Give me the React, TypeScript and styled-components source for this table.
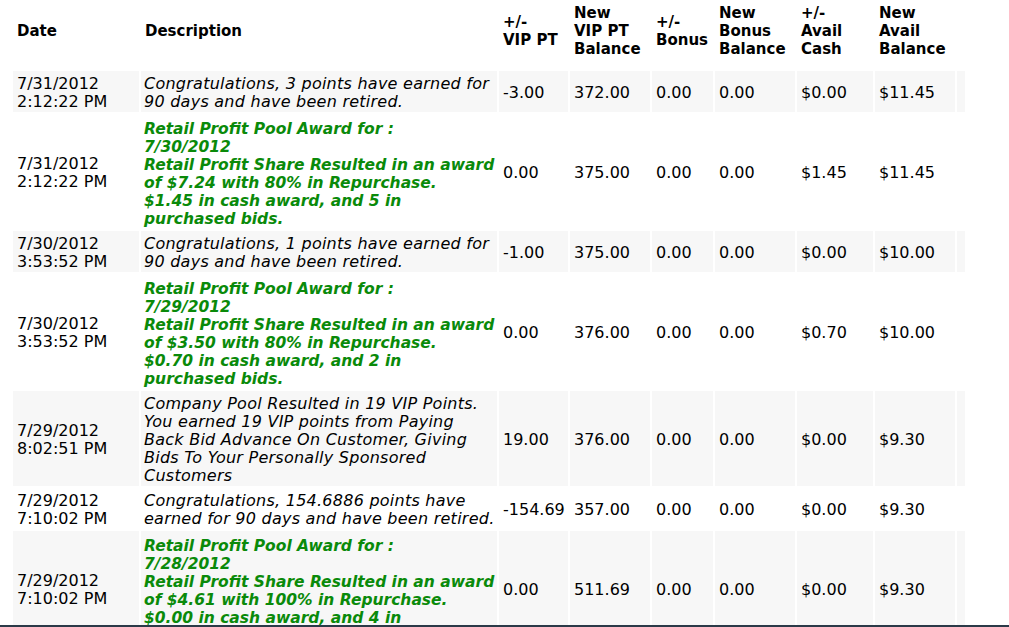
import React from 'react';
import styled, { createGlobalStyle } from 'styled-components';

const GlobalStyle = createGlobalStyle`
  html, body {
    margin: 0;
    padding: 0;
    background: #fff;
  }
`;

const Page = styled.div`
  height: 627px;
  display: flex;
  flex-direction: column;
  overflow: hidden;
  font-family: 'DejaVu Sans', Verdana, sans-serif;
  font-size: 16px;
  color: #000;
`;

const Scroller = styled.div`
  flex: 1;
  overflow: hidden;
  padding-left: 11px;
`;

const BottomEdge = styled.div`
  height: 2px;
  background: #2b3a48;
`;

const Table = styled.table`
  border-collapse: separate;
  border-spacing: 2px;
  table-layout: fixed;
  width: 956px;
`;

const HeadCell = styled.th`
  font-size: 15px;
  font-weight: bold;
  text-align: left;
  vertical-align: middle;
  line-height: 18px;
  padding: 2px 0 11px 4px;
  background: #fff;
`;

const Row = styled.tr<{ $shaded?: boolean }>`
  background: ${(p) => (p.$shaded ? '#f7f7f7' : '#fff')};
`;

const Cell = styled.td`
  vertical-align: middle;
  line-height: 18px;
  padding: 4px 0 1px 4px;
  white-space: nowrap;
`;

const DescCell = styled.td<{ $award?: boolean }>`
  vertical-align: middle;
  line-height: 18px;
  padding: ${(p) => (p.$award ? '6px 0 1px 3px' : '4px 0 1px 3px')};
  font-style: italic;
  font-weight: ${(p) => (p.$award ? 'bold' : 'normal')};
  font-size: ${(p) => (p.$award ? '15.5px' : '16px')};
  letter-spacing: ${(p) => (p.$award ? '0' : '0.25px')};
  color: ${(p) => (p.$award ? '#0a8a0a' : '#000')};
`;

const DateCell = styled(Cell)`
  white-space: normal;
`;

type Entry = {
  date: string;
  time: string;
  award?: boolean;
  text: React.ReactNode;
  values: string[];
};

const award = (forDate: string, amount: string, pct: string, cash: string, bids: string) => (
  <>
    Retail Profit Pool Award for :
    <br />
    {forDate}
    <br />
    Retail Profit Share Resulted in an award
    <br />
    of {amount} with {pct} in Repurchase.
    <br />
    {cash} in cash award, and {bids} in
    <br />
    purchased bids.
  </>
);

const entries: Entry[] = [
  {
    date: '7/31/2012',
    time: '2:12:22 PM',
    text: 'Congratulations, 3 points have earned for 90 days and have been retired.',
    values: ['-3.00', '372.00', '0.00', '0.00', '$0.00', '$11.45'],
  },
  {
    date: '7/31/2012',
    time: '2:12:22 PM',
    award: true,
    text: award('7/30/2012', '$7.24', '80%', '$1.45', '5'),
    values: ['0.00', '375.00', '0.00', '0.00', '$1.45', '$11.45'],
  },
  {
    date: '7/30/2012',
    time: '3:53:52 PM',
    text: 'Congratulations, 1 points have earned for 90 days and have been retired.',
    values: ['-1.00', '375.00', '0.00', '0.00', '$0.00', '$10.00'],
  },
  {
    date: '7/30/2012',
    time: '3:53:52 PM',
    award: true,
    text: award('7/29/2012', '$3.50', '80%', '$0.70', '2'),
    values: ['0.00', '376.00', '0.00', '0.00', '$0.70', '$10.00'],
  },
  {
    date: '7/29/2012',
    time: '8:02:51 PM',
    text: (
      <>
        Company Pool Resulted in 19 VIP Points.
        <br />
        You earned 19 VIP points from Paying Back Bid Advance On Customer, Giving Bids To Your
        Personally Sponsored Customers
      </>
    ),
    values: ['19.00', '376.00', '0.00', '0.00', '$0.00', '$9.30'],
  },
  {
    date: '7/29/2012',
    time: '7:10:02 PM',
    text: 'Congratulations, 154.6886 points have earned for 90 days and have been retired.',
    values: ['-154.69', '357.00', '0.00', '0.00', '$0.00', '$9.30'],
  },
  {
    date: '7/29/2012',
    time: '7:10:02 PM',
    award: true,
    text: award('7/28/2012', '$4.61', '100%', '$0.00', '4'),
    values: ['0.00', '511.69', '0.00', '0.00', '$0.00', '$9.30'],
  },
];

const widths = [126, 356, 69, 80, 61, 80, 76, 80, 8];

export default function App() {
  return (
    <Page>
      <GlobalStyle />
      <Scroller>
        <Table>
          <colgroup>
            {widths.map((w, i) => (
              <col key={i} style={{ width: w }} />
            ))}
          </colgroup>
          <thead>
            <tr>
              <HeadCell>Date</HeadCell>
              <HeadCell>Description</HeadCell>
              <HeadCell>
                +/-
                <br />
                VIP PT
              </HeadCell>
              <HeadCell>
                New
                <br />
                VIP PT
                <br />
                Balance
              </HeadCell>
              <HeadCell>
                +/-
                <br />
                Bonus
              </HeadCell>
              <HeadCell>
                New
                <br />
                Bonus
                <br />
                Balance
              </HeadCell>
              <HeadCell>
                +/-
                <br />
                Avail
                <br />
                Cash
              </HeadCell>
              <HeadCell>
                New
                <br />
                Avail
                <br />
                Balance
              </HeadCell>
              <HeadCell />
            </tr>
          </thead>
          <tbody>
            {entries.map((e, i) => (
              <Row key={i} $shaded={i % 2 === 0}>
                <DateCell>
                  {e.date}
                  <br />
                  {e.time}
                </DateCell>
                <DescCell $award={e.award}>{e.text}</DescCell>
                {e.values.map((v, j) => (
                  <Cell key={j}>{v}</Cell>
                ))}
                <Cell />
              </Row>
            ))}
          </tbody>
        </Table>
      </Scroller>
      <BottomEdge />
    </Page>
  );
}
